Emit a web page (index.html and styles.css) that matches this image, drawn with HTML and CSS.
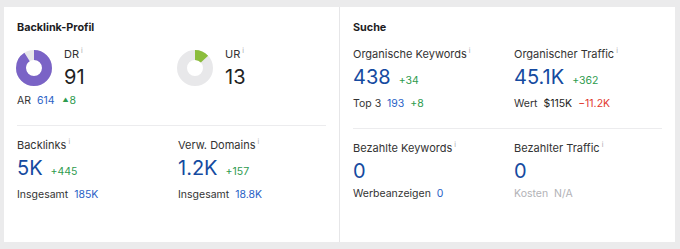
FILE: index.html
```html
<!DOCTYPE html>
<html>
  <head>
    <title>Übersicht</title>
    <link rel="stylesheet" href="styles.css">
  </head>
  <body>
    <div class="overview">
      <div class="panel">
        <div class="panel-title">Backlink-Profil</div>
        <div class="metric-row top">
          <div class="metric">
            <div class="rating">
              <svg class="donut" viewBox="0 0 36 36">
                <circle cx="18" cy="18" r="13" class="donut-track"/>
                <circle cx="18" cy="18" r="13" class="donut-value dr" pathLength="100" stroke-dasharray="91 100"/>
              </svg>
              <div>
                <div class="label">DR<sup class="info">i</sup></div>
                <div class="value dark">91</div>
              </div>
            </div>
            <div class="sub">AR <span class="link">614</span> <span class="up"><span class="arrow">▲</span>8</span></div>
          </div>
          <div class="metric">
            <div class="rating">
              <svg class="donut" viewBox="0 0 36 36">
                <circle cx="18" cy="18" r="13" class="donut-track"/>
                <circle cx="18" cy="18" r="13" class="donut-value ur" pathLength="100" stroke-dasharray="13 100"/>
              </svg>
              <div>
                <div class="label">UR<sup class="info">i</sup></div>
                <div class="value dark">13</div>
              </div>
            </div>
          </div>
        </div>
        <div class="metric-row">
          <div class="metric">
            <div class="label">Backlinks<sup class="info">i</sup></div>
            <div class="value">5K<span class="delta plus">+445</span></div>
            <div class="sub">Insgesamt <span class="link">185K</span></div>
          </div>
          <div class="metric">
            <div class="label">Verw. Domains<sup class="info">i</sup></div>
            <div class="value">1.2K<span class="delta plus">+157</span></div>
            <div class="sub">Insgesamt <span class="link">18.8K</span></div>
          </div>
        </div>
      </div>
      <div class="panel">
        <div class="panel-title">Suche</div>
        <div class="metric-row top">
          <div class="metric">
            <div class="label">Organische Keywords<sup class="info">i</sup></div>
            <div class="value">438<span class="delta plus">+34</span></div>
            <div class="sub">Top 3 <span class="link">193</span> <span class="plus">+8</span></div>
          </div>
          <div class="metric">
            <div class="label">Organischer Traffic<sup class="info">i</sup></div>
            <div class="value">45.1K<span class="delta plus">+362</span></div>
            <div class="sub">Wert <span class="dark">$115K</span> <span class="minus">−11.2K</span></div>
          </div>
        </div>
        <div class="metric-row">
          <div class="metric">
            <div class="label">Bezahlte Keywords<sup class="info">i</sup></div>
            <div class="value">0</div>
            <div class="sub">Werbeanzeigen <span class="link">0</span></div>
          </div>
          <div class="metric">
            <div class="label">Bezahlter Traffic<sup class="info">i</sup></div>
            <div class="value">0</div>
            <div class="sub muted">Kosten <span>N/A</span></div>
          </div>
        </div>
      </div>
    </div>
  </body>
</html>
```

FILE: styles.css
```css
body {
  margin: 0;
  background-color: #ebebec;
  font-family: Inter, "Noto Sans", sans-serif;
  color: #333;
}

.overview {
  display: grid;
  grid-template-columns: 1fr 1fr;
  gap: 1px;
  margin: 7px 5px 0 4px;
  height: 235px;
  background-color: #e6e6e8;
}

.panel {
  background-color: #fff;
  padding: 13px 13px 0 13px;
}

.panel-title {
  font-size: 10.8px;
  line-height: 16px;
  font-weight: 700;
  color: #1d1d1f;
  margin-bottom: 11px;
}

.metric-row {
  display: grid;
  grid-template-columns: 1fr 1fr;
  column-gap: 13px;
  padding-top: 12px;
}

.metric-row.top {
  padding-top: 0;
  padding-bottom: 17px;
  border-bottom: 1px solid #ececee;
}

.rating {
  display: flex;
  align-items: center;
  gap: 12px;
  margin-left: -1px;
}

.donut {
  width: 36px;
  height: 36px;
  transform: rotate(-90deg);
}

.donut-track,
.donut-value {
  fill: none;
  stroke-width: 10;
}

.donut-track {
  stroke: #e8e8ea;
}

.dr {
  stroke: #7a63c6;
}

.ur {
  stroke: #8bbd3c;
}

.label {
  font-size: 11px;
  line-height: 14px;
  color: #333;
}

.info {
  font-size: 7px;
  color: #a8a8ad;
  vertical-align: top;
  line-height: 7px;
  margin-left: 2px;
}

.value {
  font-size: 20px;
  line-height: 24px;
  color: #154aa0;
  margin-top: 4px;
}

.value.dark {
  color: #222;
}

.delta {
  font-size: 10.5px;
  margin-left: 8px;
}

.sub {
  font-size: 10.5px;
  line-height: 14px;
  color: #333;
  margin-top: 4px;
}

.sub span {
  margin-left: 3px;
}

.sub .arrow {
  margin-left: 2px;
  margin-right: 1px;
}

.link {
  color: #2a62c6;
}

.plus,
.up {
  color: #2e9b4e;
}

.minus {
  color: #e23a31;
}

.dark {
  color: #222;
}

.arrow {
  font-size: 6px;
  vertical-align: 2px;
}

.muted,
.muted span {
  color: #b2b2b6;
}
```
